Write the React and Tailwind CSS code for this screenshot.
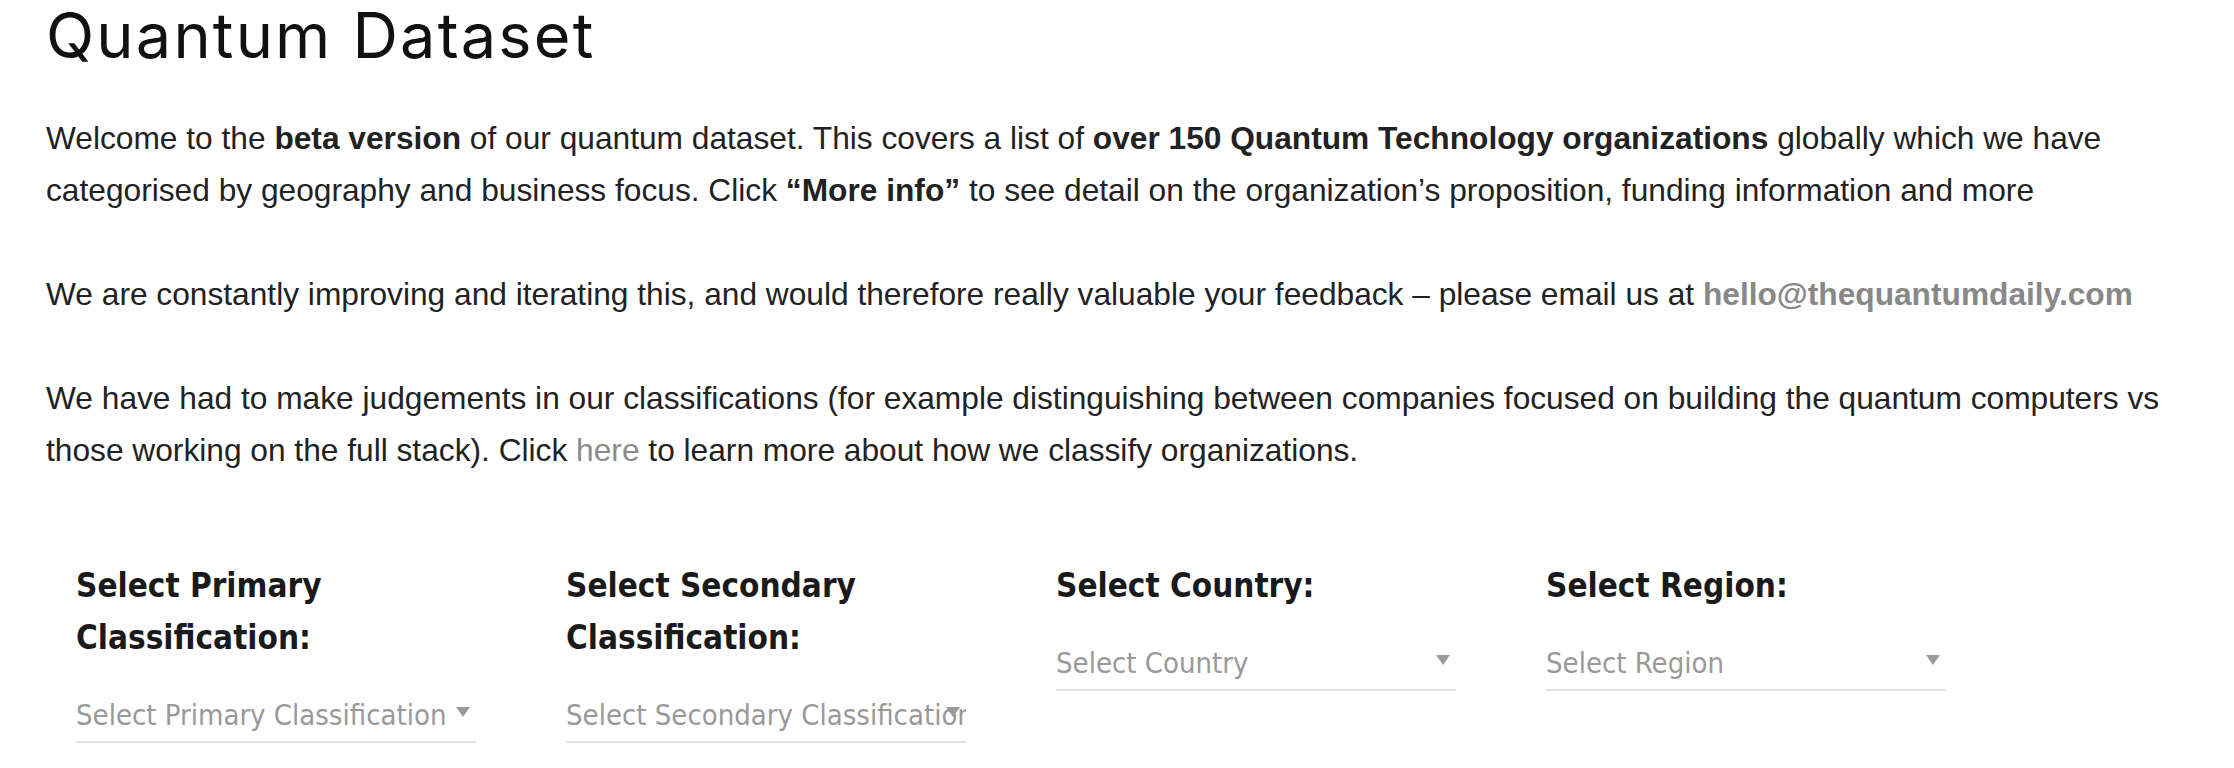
const filters = [
  { label: "Select Primary Classification:", placeholder: "Select Primary Classification" },
  { label: "Select Secondary Classification:", placeholder: "Select Secondary Classification" },
  { label: "Select Country:", placeholder: "Select Country" },
  { label: "Select Region:", placeholder: "Select Region" },
];

const FilterSelect = ({ label, placeholder }) => {
  return (
    <div className="flex flex-col w-[400px]">
      <label className="font-['DejaVu_Sans_Condensed','DejaVu_Sans',sans-serif] font-bold text-[33px] leading-[52px] text-[#1a1a1a]">
        {label}
      </label>
      {/* fake select: placeholder + caret + underline */}
      <div className="relative mt-[22px] pt-[9px] pb-[6px] border-b-2 border-[#e2e2e2]">
        <div className="overflow-hidden whitespace-nowrap font-['DejaVu_Sans_Condensed','DejaVu_Sans',sans-serif] text-[29px] leading-[40px] text-[#999999]">
          {placeholder}
        </div>
        <span className="absolute right-[6px] top-[21px] w-0 h-0 border-l-[7px] border-r-[7px] border-t-[10px] border-l-transparent border-r-transparent border-t-[#9a9a9a]" />
      </div>
    </div>
  );
};

const App = () => {
  return (
    <div className="min-h-screen bg-white px-[46px] pt-[4px]">
      <h1 className="font-['Inter',sans-serif] text-[63px] leading-[62px] tracking-[2.2px] text-[#111111] font-normal">
        Quantum Dataset
      </h1>

      <div className="mt-[46px] font-['Liberation_Sans',Arial,sans-serif] text-[31.7px] leading-[52px] text-[#222222] w-[2150px]">
        <p className="mb-[52px]">
          Welcome to the <strong>beta version</strong> of our quantum dataset. This covers a list of{" "}
          <strong>over 150 Quantum Technology organizations</strong> globally which we have categorised by
          geography and business focus. Click <strong>“More info”</strong> to see detail on the
          organization’s proposition, funding information and more
        </p>
        <p className="mb-[52px]">
          We are constantly improving and iterating this, and would therefore really valuable your feedback – please
          email us at <a className="font-bold text-[#888888]">hello@thequantumdaily.com</a>
        </p>
        <p>
          We have had to make judgements in our classifications (for example distinguishing between companies focused
          on building the quantum computers vs those working on the full stack). Click{" "}
          <a className="text-[#8c8c8c]">here</a> to learn more about how we classify organizations.
        </p>
      </div>

      <div className="mt-[84px] pl-[30px] flex gap-x-[90px] items-start">
        {filters.map((f) => (
          <FilterSelect key={f.label} label={f.label} placeholder={f.placeholder} />
        ))}
      </div>
    </div>
  );
};

export default App;
